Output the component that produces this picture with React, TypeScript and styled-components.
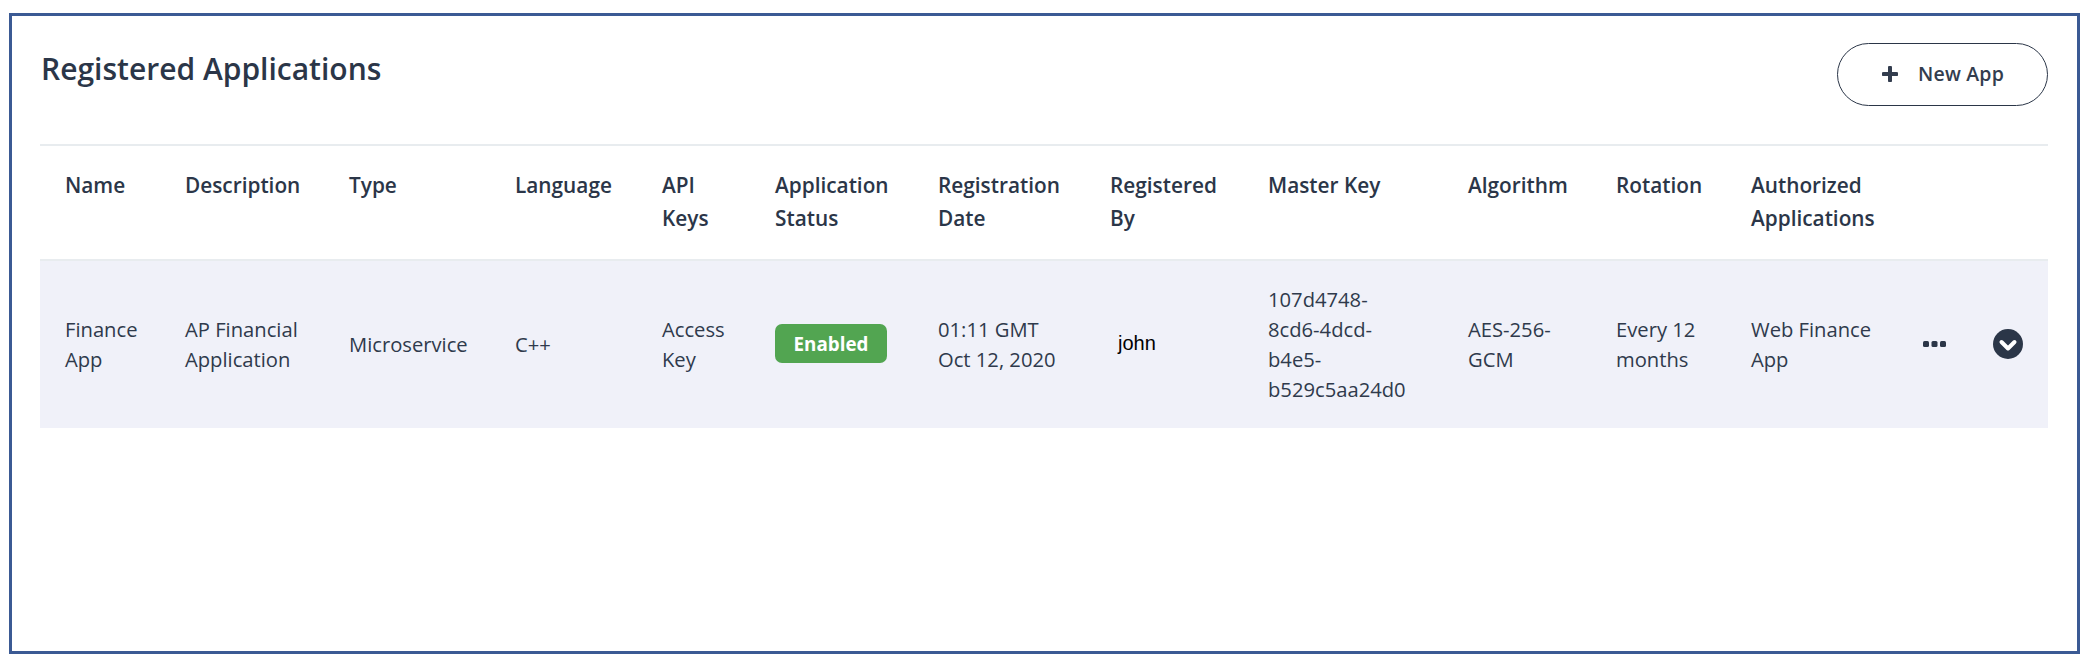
import React from "react";
import styled, { createGlobalStyle } from "styled-components";

const Global = createGlobalStyle`
  html, body { margin: 0; padding: 0; background: #fff; }
  body { font-family: "Open Sans", "Liberation Sans", sans-serif; color: #2b3648; }
`;

const Frame = styled.main`
  box-sizing: border-box;
  width: 2071px;
  height: 641px;
  margin: 13px 0 8px 9px;
  padding: 27px 29px 0 28px;
  border: 3px solid #3b5a94;
  background: #fff;
`;

const TopBar = styled.header`
  display: flex;
  justify-content: space-between;
  align-items: flex-start;
  height: 103px;
  box-sizing: border-box;
  border-bottom: 2px solid #e8ecef;
`;

const Title = styled.h1`
  margin: 6px 0 0 1px;
  font-size: 30px;
  line-height: 40px;
  font-weight: 600;
  color: #2b3648;
`;

const NewAppButton = styled.button`
  display: flex;
  align-items: center;
  justify-content: center;
  gap: 20px;
  box-sizing: border-box;
  width: 211px;
  height: 63px;
  padding: 0 0 2px 1px;
  border: 1.5px solid #2b3648;
  border-radius: 32px;
  background: #fff;
  color: #333d4e;
  font: 600 19.5px "Open Sans", sans-serif;
  letter-spacing: 0.2px;
`;

const columns = "120px 164px 166px 147px 113px 163px 172px 158px 200px 148px 135px 172px 70px 1fr";

const HeaderRow = styled.div`
  display: grid;
  grid-template-columns: ${columns};
  height: 115px;
  padding-top: 23px;
  box-sizing: border-box;
  border-bottom: 2px solid #e8ecef;
`;

const HeaderCell = styled.div`
  padding-left: 25px;
  font-size: 20.8px;
  line-height: 33px;
  font-weight: 600;
  color: #2b3648;
`;

const DataRow = styled.div`
  display: grid;
  grid-template-columns: ${columns};
  align-items: center;
  height: 167px;
  padding-bottom: 2px;
  box-sizing: border-box;
  background: #f0f1f9;
`;

const DataCell = styled.div`
  padding-left: 25px;
  font-size: 20.2px;
  line-height: 30px;
  color: #2f3a4c;
`;

const OwnerCell = styled.div`
  padding-left: 33px;
  font: 20px "Liberation Sans", sans-serif;
  color: #000;
`;

const Badge = styled.span`
  display: inline-flex;
  align-items: center;
  justify-content: center;
  width: 112px;
  height: 39px;
  border-radius: 7px;
  background: #52a551;
  color: #fff;
  font-size: 18.8px;
  font-weight: 700;
`;

const IconCell = styled.div`
  display: flex;
  align-items: center;
  padding-left: 25px;
`;

const Dots = () => (
  <svg width="23" height="8" viewBox="0 0 23 8" fill="#2b3648">
    <rect x="0" y="1" width="6" height="6" rx="1.5" />
    <rect x="8.5" y="1" width="6" height="6" rx="1.5" />
    <rect x="17" y="1" width="6" height="6" rx="1.5" />
  </svg>
);

const Chevron = () => (
  <svg width="30" height="30" viewBox="0 0 30 30">
    <circle cx="15" cy="15" r="15" fill="#2b3648" />
    <path d="M8.5 13 15 19.5 21.5 13" fill="none" stroke="#fff" strokeWidth="4" strokeLinecap="round" strokeLinejoin="round" />
  </svg>
);

const Plus = () => (
  <svg width="16" height="16" viewBox="0 0 16 16">
    <path d="M8 1.5v13M1.5 8h13" stroke="#333d4e" strokeWidth="4" strokeLinecap="round" />
  </svg>
);

const headers: React.ReactNode[] = [
  "Name", "Description", "Type", "Language", <>API<br />Keys</>, <>Application<br />Status</>,
  <>Registration<br />Date</>, <>Registered<br />By</>, "Master Key", "Algorithm", "Rotation", <>Authorized<br />Applications</>,
];

export default function App() {
  return (
    <>
      <Global />
      <Frame>
        <TopBar>
          <Title>Registered Applications</Title>
          <NewAppButton><Plus />New App</NewAppButton>
        </TopBar>
        <HeaderRow>
          {headers.map((h, i) => <HeaderCell key={i}>{h}</HeaderCell>)}
        </HeaderRow>
        <DataRow>
          <DataCell>Finance<br />App</DataCell>
          <DataCell>AP Financial<br />Application</DataCell>
          <DataCell>Microservice</DataCell>
          <DataCell>C++</DataCell>
          <DataCell>Access<br />Key</DataCell>
          <DataCell><Badge>Enabled</Badge></DataCell>
          <DataCell>01:11 GMT<br />Oct 12, 2020</DataCell>
          <OwnerCell>john</OwnerCell>
          <DataCell>107d4748-<br />8cd6-4dcd-<br />b4e5-<br />b529c5aa24d0</DataCell>
          <DataCell>AES-256-<br />GCM</DataCell>
          <DataCell>Every 12<br />months</DataCell>
          <DataCell>Web Finance<br />App</DataCell>
          <IconCell><Dots /></IconCell>
          <IconCell><Chevron /></IconCell>
        </DataRow>
      </Frame>
    </>
  );
}
